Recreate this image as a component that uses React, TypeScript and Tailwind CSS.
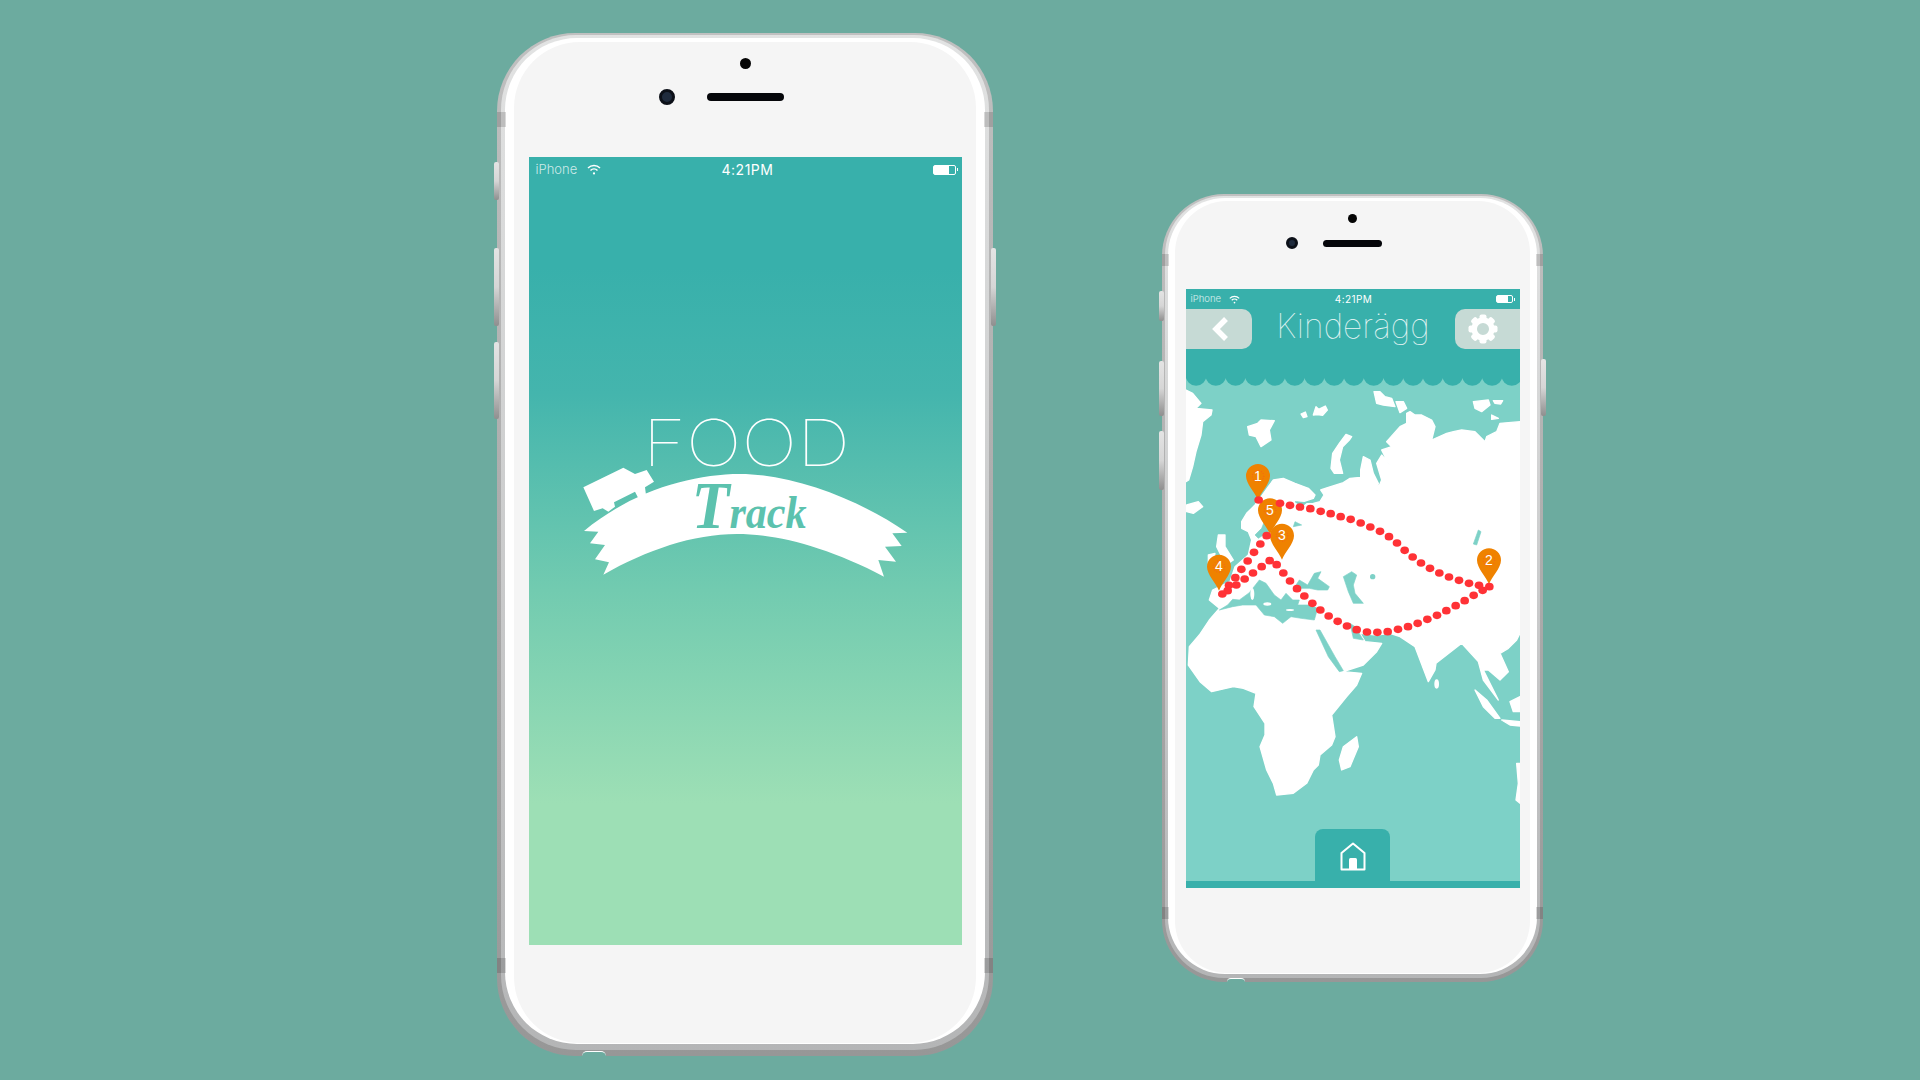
import type { ReactNode } from 'react'

const UI_FONT = 'font-[Inter,"Liberation_Sans",sans-serif]'

const LAND = `205,395 185,385 185,365 200,340 225,315 240,295 265,260 280,240 310,235 345,250 385,265 405,285 400,295 370,305 345,302 350,312 400,310 420,305 432,285 422,270 445,262 490,248 510,235 542,232 542,210 550,170 570,180 580,220 595,250 590,275 605,240 590,190 605,165 635,200 620,180 605,150 635,140 620,125 660,80 680,70 680,40 690,35 705,45 725,45 755,60 765,80 755,120 800,100 820,95 845,90 885,95 915,125 920,110 950,95 960,70 1020,65 1020,700 1010,720 985,745 960,760 985,815 960,840 925,810 910,810 955,900 910,840 895,785 845,730 768,790 765,810 745,845 705,740 660,710 630,700 590,705 540,700 555,725 605,730 590,755 550,795 490,815 545,820 530,855 500,890 455,945 465,1010 455,1035 420,1065 415,1095 400,1110 380,1150 340,1180 290,1185 280,1150 260,1110 240,1040 255,1005 255,970 222,920 228,880 190,865 160,860 95,875 60,845 25,795 28,740 58,705 88,660 118,625 88,600 98,570 150,545 165,500 205,465 215,420`

const ISLANDS = [
  '18,-30 38,-20 63,10 48,25 96,30 93,45 68,65 63,105 48,155 38,200 26,240 18,245',
  '203,80 233,70 243,60 283,62 268,90 273,120 243,140 228,110 208,105',
  '363,42 376,36 381,50 370,53',
  '400,45 408,20 416,28 436,18 442,30 428,46 412,44',
  '453,205 458,160 478,130 498,103 515,110 508,120 488,140 478,180 488,220 463,220',
  '20,315 55,305 68,320 40,340 20,335',
  '115,405 135,405 135,440 160,480 130,500 100,490 125,470 110,440',
  '85,465 105,460 100,485 85,490',
  '530,1010 535,1040 510,1100 485,1110 478,1080 490,1040',
  '885,870 920,900 960,955 945,955 910,920',
  '965,960 1020,965 1020,978 990,975',
  '990,905 1020,890 1020,935 1000,935',
  '1010,1090 1020,1090 1020,1210 1008,1200 1015,1150',
  '582,-25 600,-25 615,-10 635,-5 645,20 610,15 590,10',
  '648,5 670,5 680,25 660,38',
  '880,5 925,0 930,15 905,35 885,25',
  '940,2 968,2 962,12 945,10',
  '935,45 955,55 935,58',
]

const SEAS = [
  '118,630 143,615 158,598 178,600 208,578 238,540 258,550 283,585 303,600 318,580 338,600 358,600 353,615 388,615 413,625 403,660 363,655 333,650 308,670 283,650 253,645 228,615 188,615 158,620',
  '358,540 383,555 403,520 423,515 413,535 448,560 443,570 413,570 388,565 358,565 348,555',
  '490,530 515,515 530,525 520,555 525,580 550,610 520,610 505,575',
  '408,690 420,690 465,770 490,812 478,815 445,770',
  '510,670 525,680 550,720 520,715',
  '235,415 265,395 285,375 275,355 255,360 245,385 225,405',
  '345,365 365,375 340,380',
  '345,305 380,308 365,320',
  '895,390 903,395 890,435 880,432',
]

const ROUTE = [
  [236, 300], [300, 310], [330, 316], [360, 321], [391, 326], [422, 334], [452, 341], [482, 350], [512, 358],
  [542, 369], [571, 381], [600, 394], [627, 410], [651, 429], [674, 451], [698, 471], [723, 489], [750, 505],
  [778, 519], [807, 531], [837, 541], [867, 550], [897, 556], [928, 560], [908, 571], [881, 586], [854, 602],
  [827, 617], [799, 632], [771, 646], [742, 658], [713, 670], [684, 680], [654, 688], [623, 695], [592, 697],
  [561, 696], [530, 689], [501, 678], [473, 664], [446, 648], [421, 630], [397, 610], [373, 588], [351, 566],
  [330, 543], [310, 519], [290, 494], [269, 482], [245, 500], [219, 519], [194, 537], [169, 555], [143, 572],
  [127, 582], [147, 556], [166, 533], [184, 508], [203, 483], [222, 457], [241, 432], [260, 407],
]

const PINS = [
  { n: 1, x: 234, y: 228 },
  { n: 2, x: 927, y: 481 },
  { n: 4, x: 117, y: 500 },
  { n: 5, x: 270, y: 331 },
  { n: 3, x: 306, y: 407 },
]

const SCALLOPS = Array.from({ length: 18 }, (_, i) => -11 + i * 59.2)

const SIZES = {
  large: {
    outer: 'w-[496px] h-[1023px] mt-[33px] rounded-[78px] px-[4px] pt-[2px] pb-[6px]',
    mid: 'rounded-[75px] px-[4px] pt-[3px] pb-[6px]',
    white: 'rounded-[72px] px-[9px] pt-[4px] pb-[1px]',
    face: 'rounded-[66px] pt-[16px]',
    dot: 'w-[11px] h-[11px]',
    row: 'mt-[20px] h-[16px]',
    camera: 'w-[16px] h-[16px] mr-[32px]',
    speaker: 'w-[77px] h-[8px]',
    screen: 'w-[433px] h-[788px] mt-[52px]',
    band: 'h-[15px] w-[9px]',
    bandTop: 'top-[79px]',
    bandBottom: 'bottom-[83px]',
    notch: 'left-[85px] h-[5px] w-[24px]',
  },
  small: {
    outer: 'w-[381px] h-[788px] mt-[194px] rounded-[62px] px-[3px] pt-[2px] pb-[4px]',
    mid: 'rounded-[59px] px-[3px] pt-[2px] pb-[4px]',
    white: 'rounded-[57px] px-[7px] pt-[3px] pb-[1px]',
    face: 'rounded-[52px] pt-[13px]',
    dot: 'w-[9px] h-[9px]',
    row: 'mt-[14px] h-[12px]',
    camera: 'w-[12px] h-[12px] mr-[25px]',
    speaker: 'w-[59px] h-[7px]',
    screen: 'w-[334px] h-[599px] mt-[40px]',
    band: 'h-[12px] w-[7px]',
    bandTop: 'top-[60px]',
    bandBottom: 'bottom-[63px]',
    notch: 'left-[65px] h-[4px] w-[18px]',
  },
}

function SideButton({ className }: { className: string }) {
  return <div className={`absolute w-[5px] rounded-[2px] bg-gradient-to-b from-[#e4e4e4] via-[#d6d6d6] to-[#8f8f8f] ${className}`} />
}

function Phone({ size, children, buttons }: { size: 'large' | 'small'; children: ReactNode; buttons: ReactNode }) {
  const s = SIZES[size]
  return (
    <div className={`relative shrink-0 bg-gradient-to-b from-[#c0c0c0] to-[#979797] ${s.outer}`}>
      {buttons}
      <div className={`h-full bg-gradient-to-b from-[#e2e3e3] to-[#b4b5b6] ${s.mid}`}>
        <div className={`h-full bg-white ${s.white}`}>
          <div className={`flex h-full flex-col items-center bg-[#f5f5f5] ${s.face}`}>
            <div className={`rounded-full bg-[#050505] ${s.dot}`} />
            <div className={`grid w-full grid-cols-[1fr_auto_1fr] items-center ${s.row}`}>
              <div className={`justify-self-end rounded-full border-[3px] border-[#0c1018] bg-[#1f2b3d] ${s.camera}`} />
              <div className={`rounded-full bg-[#05060a] ${s.speaker}`} />
            </div>
            <div className={`overflow-hidden ${s.screen}`}>{children}</div>
          </div>
        </div>
      </div>
      <div className={`absolute left-0 bg-black/15 ${s.band} ${s.bandTop}`} />
      <div className={`absolute right-0 bg-black/15 ${s.band} ${s.bandTop}`} />
      <div className={`absolute left-0 bg-black/15 ${s.band} ${s.bandBottom}`} />
      <div className={`absolute right-0 bg-black/15 ${s.band} ${s.bandBottom}`} />
      <div className={`absolute bottom-0 rounded-t-full border-t border-white bg-[#6cab9f] ${s.notch}`} />
    </div>
  )
}

function Wifi({ className }: { className: string }) {
  return (
    <svg viewBox="0 0 14 11" fill="none" stroke="currentColor" strokeWidth="1.5" className={className}>
      <path d="M1 4 A8.5 8.5 0 0 1 13 4" />
      <path d="M3.5 6.5 A5 5 0 0 1 10.5 6.5" />
      <circle cx="7" cy="9.4" r="1.1" fill="currentColor" stroke="none" />
    </svg>
  )
}

function Battery({ small }: { small?: boolean }) {
  return (
    <div className="flex items-center gap-[1px]">
      <div className={small ? 'h-[8px] w-[17px] rounded-[2px] border border-white' : 'h-[10px] w-[23px] rounded-[2px] border border-white'}>
        <div className="h-full w-3/4 bg-white" />
      </div>
      <div className="h-[3px] w-[1px] bg-white" />
    </div>
  )
}

function Gear() {
  return (
    <svg viewBox="0 0 30 30" className="h-[30px] w-[30px]" fill="#ffffff">
      {[0, 45, 90, 135, 180, 225, 270, 315].map((a) => (
        <rect key={a} x="11.5" y="0.5" width="7" height="8" rx="2" transform={`rotate(${a} 15 15)`} />
      ))}
      <circle cx="15" cy="15" r="8.8" fill="none" stroke="#ffffff" strokeWidth="5.5" />
    </svg>
  )
}

function HomeIcon() {
  return (
    <svg viewBox="0 0 26 29" className="h-[29px] w-[26px]" fill="none" stroke="#ffffff" strokeWidth="2">
      <path d="M1.5 27.5 V11 L13 1.5 L24.5 11 V27.5 Z" strokeLinejoin="round" />
      <path d="M9 27 V17.5 Q9 16 10.5 16 H15.5 Q17 16 17 17.5 V27 Z" fill="#ffffff" stroke="none" />
    </svg>
  )
}

function WorldMap() {
  return (
    <svg viewBox="18 -66 1002 1509" className="block h-[503px] w-[334px] bg-[#7dd1c7]">
      <g fill="#ffffff" stroke="#ffffff" strokeWidth="4" strokeLinejoin="round">
        <polygon points={LAND} />
        {ISLANDS.map((p) => (
          <polygon key={p} points={p} />
        ))}
      </g>
      <g fill="#7dd1c7" stroke="#7dd1c7" strokeWidth="2" strokeLinejoin="round">
        {SEAS.map((p) => (
          <polygon key={p} points={p} />
        ))}
      </g>
      <ellipse cx="217" cy="582" rx="6" ry="18" fill="#ffffff" />
      <ellipse cx="262" cy="612" rx="12" ry="5" fill="#ffffff" />
      <ellipse cx="330" cy="630" rx="12" ry="3" fill="#ffffff" />
      <ellipse cx="770" cy="852" rx="7" ry="14" fill="#ffffff" />
      <circle cx="578" cy="530" r="8" fill="#7dd1c7" />
      {SCALLOPS.map((x) => (
        <circle key={x} cx={x} cy="-74" r="31" fill="#38b0ab" />
      ))}
      {PINS.map((pin) => (
        <g key={pin.n} transform={`translate(${pin.x} ${pin.y})`}>
          <path d="M-36 0 A36 36 0 1 1 36 0 C36 24 8 50 0 72 C-8 50 -36 24 -36 0 Z" fill="#ef8200" />
          <circle r="17" fill="none" stroke="#ff3a3a" strokeWidth="2" strokeDasharray="2 6" />
          <text y="14" textAnchor="middle" fill="#ffffff" className="font-['Liberation_Sans'] text-[42px]">
            {pin.n}
          </text>
        </g>
      ))}
      {ROUTE.map(([x, y]) => (
        <ellipse key={`${x}-${y}`} cx={x} cy={y} rx="13" ry="11.5" fill="#ff3236" />
      ))}
    </svg>
  )
}

function FoodTrackLogo() {
  return (
    <svg viewBox="0 0 1080 600" className="ml-[31px] mt-[219px] block h-[200px] w-[360px]">
      <text x="248" y="197" textLength="622" lengthAdjust="spacingAndGlyphs" fill="#ffffff" className="font-[Inter,sans-serif] text-[194px] font-thin">
        FOOD
      </text>
      <polygon points="70,262 190,203 225,222 260,210 282,245 255,262 258,285 235,295 225,275 162,307 165,320 145,335 128,325 102,333" fill="#ffffff" />
      <path d="M72 393 C220 270 400 222 540 222 C700 222 900 300 1042 398 L997 400 L1025 438 L975 440 L1008 485 L955 480 L972 530 C800 440 650 402 530 402 C400 402 260 450 130 524 L147 487 L105 478 L135 435 L90 430 L115 395 Z" fill="#ffffff" />
      <text x="395" y="385" textLength="345" lengthAdjust="spacingAndGlyphs" fill="#5cc2ae" className="font-['Liberation_Serif',serif] text-[140px] font-bold italic">
        <tspan className="text-[205px]">T</tspan>rack
      </text>
    </svg>
  )
}

export default function App() {
  return (
    <div className={`flex h-[1080px] w-[1920px] items-start gap-[169px] overflow-hidden bg-[#6cab9f] pl-[497px] ${UI_FONT}`}>
      <Phone
        size="large"
        buttons={
          <>
            <SideButton className="-left-[3px] top-[129px] h-[38px]" />
            <SideButton className="-left-[3px] top-[215px] h-[78px]" />
            <SideButton className="-left-[3px] top-[309px] h-[77px]" />
            <SideButton className="-right-[3px] top-[215px] h-[78px]" />
          </>
        }
      >
        <div className="h-full bg-[linear-gradient(#38b0ab_14%,#44b5ad_30%,#72cbb0_55%,#9ddfb5_82%)]">
          <div className="grid h-[24px] grid-cols-3 items-center pl-[7px] pr-[4px] pt-[1px] text-white">
            <div className="flex items-center gap-[10px]">
              <span className="text-[13px] font-light text-white/75">iPhone</span>
              <Wifi className="h-[11px] w-[14px]" />
            </div>
            <span className="pl-[2px] text-center text-[14px] tracking-[0.5px]">4:21PM</span>
            <div className="flex justify-end">
              <Battery />
            </div>
          </div>
          <FoodTrackLogo />
        </div>
      </Phone>

      <Phone
        size="small"
        buttons={
          <>
            <SideButton className="-left-[3px] top-[97px] h-[30px]" />
            <SideButton className="-left-[3px] top-[167px] h-[55px]" />
            <SideButton className="-left-[3px] top-[237px] h-[59px]" />
            <SideButton className="-right-[3px] top-[165px] h-[57px]" />
          </>
        }
      >
        <div className="relative flex h-full flex-col bg-[#38b0ab]">
          <div className="grid h-[20px] grid-cols-3 items-center px-[5px] text-white">
            <div className="flex items-center gap-[8px]">
              <span className="text-[9.5px] font-light text-white/80">iPhone</span>
              <Wifi className="h-[9px] w-[11px]" />
            </div>
            <span className="pl-[2px] text-center text-[10px] tracking-[0.4px]">4:21PM</span>
            <div className="flex justify-end">
              <Battery small />
            </div>
          </div>
          <div className="flex h-[69px] items-start justify-between">
            <div className="flex h-[40px] w-[66px] items-center justify-end rounded-r-[10px] bg-[#c6dad5] pr-[23px]">
              <svg viewBox="0 0 18 26" className="h-[26px] w-[18px]" fill="none" stroke="#ffffff" strokeWidth="5.5">
                <path d="M15 3 L5 13 L15 23" />
              </svg>
            </div>
            <span className="mt-[-6px] text-[33.5px] font-thin leading-[46px] text-white/90">Kinderägg</span>
            <div className="flex h-[40px] w-[65px] items-center rounded-l-[10px] bg-[#c6dad5] pl-[13px]">
              <Gear />
            </div>
          </div>
          <WorldMap />
          <div className="h-[7px] bg-[#38b0ab]" />
          <div className="absolute bottom-0 left-[129px] flex h-[59px] w-[75px] justify-center rounded-t-[8px] bg-[#38b0ab] pl-[1px] pt-[13px]">
            <HomeIcon />
          </div>
        </div>
      </Phone>
    </div>
  )
}
